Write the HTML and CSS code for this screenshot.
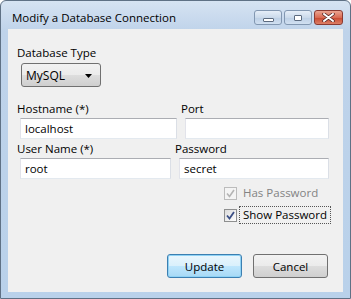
FILE: index.html
```html
<!DOCTYPE html>
<html lang="en">
<head>
  <meta charset="UTF-8">
  <title>Modify a Database Connection</title>
  <link rel="stylesheet" href="styles.css">
</head>
<body>
  <div class="window">
    <!--title bar-->
    <div class="titlebar">
      <span class="title">Modify a Database Connection</span>
      <div class="capBtns">
        <span class="capBtn min"><i></i></span>
        <span class="capBtn max"><i></i></span>
        <span class="capBtn close">
          <svg width="13" height="9" viewBox="0 0 13 9"><path d="M2 1 L11 8 M11 1 L2 8" stroke="#4a2020" stroke-width="3.4" stroke-linecap="round"/><path d="M2 1 L11 8 M11 1 L2 8" stroke="#fff" stroke-width="2" stroke-linecap="round"/></svg>
        </span>
      </div>
    </div>

    <!--client area-->
    <div class="client">
      <div class="typeGroup">
        <div class="label">Database Type</div>
        <div class="combo">
          <span>MySQL</span>
          <svg width="7" height="4" viewBox="0 0 7 4"><path d="M0 0 H7 L3.5 4 Z" fill="#000"/></svg>
        </div>
      </div>

      <div class="row hostRow">
        <div class="cell">
          <div class="label">Hostname (*)</div>
          <div class="input host">localhost</div>
        </div>
        <div class="cell">
          <div class="label">Port</div>
          <div class="input port"></div>
        </div>
      </div>

      <div class="row userRow">
        <div class="cell">
          <div class="label">User Name (*)</div>
          <div class="input user">root</div>
        </div>
        <div class="cell">
          <div class="label">Password</div>
          <div class="input pass">secret</div>
        </div>
      </div>

      <div class="checks">
        <div class="check disabled">
          <span class="box">
            <svg width="9" height="9" viewBox="0 0 9 9"><path d="M1 4.5 L3.5 7.5 L8 1" fill="none" stroke="#b4b4b4" stroke-width="1.6"/></svg>
          </span>
          <span class="checkText">Has Password</span>
        </div>
        <div class="check">
          <span class="box">
            <svg width="9" height="9" viewBox="0 0 9 9"><path d="M1 4.5 L3.5 7.5 L8 1" fill="none" stroke="#3b4f86" stroke-width="1.8"/></svg>
          </span>
          <span class="checkText focus">Show Password</span>
        </div>
      </div>

      <div class="actions">
        <span class="btn default">Update</span>
        <span class="btn">Cancel</span>
      </div>
    </div>
  </div>
</body>
</html>
```

FILE: styles.css
```css
*{box-sizing: border-box;}
body{
  margin:0;
  font-family:"Open Sans", "Noto Sans", sans-serif;
  font-size:11.5px;
  color:#000;
  background:#fff;
}
.window{
  width:351px;
  height:299px;
  border:1px solid #5f7185;
  border-radius:6px 6px 0 0;
  background:linear-gradient(#d6e3f2, #bfd3ea 30px, #b9d1ea);
  display:flex;
  flex-direction:column;
}

/*title bar*/
.titlebar{
  height:28px;
  display:flex;
  align-items:flex-start;
  justify-content:space-between;
  padding:0 7px 0 11px;
}
.title{
  font-size:11.5px;
  line-height:15px;
  margin-top:9px;
}
.capBtns{
  display:flex;
  gap:2px;
  margin-top:9px;
}
.capBtn{
  width:28px;
  height:15px;
  border:1px solid #8297b1;
  border-radius:3px;
  background:linear-gradient(#e6eef8, #cbdaeb 50%, #bccfe5 51%, #d1e0f1);
  display:flex;
  align-items:center;
  justify-content:center;
}
.capBtn i{
  display:block;
  border:1px solid #5c6b80;
  border-radius:1px;
  background:#fff;
}
.min i{width:11px; height:4px; margin-top:4px;}
.max i{width:8px; height:6px;}
.close{
  width:29px;
  border-color:#8b3a32;
  background:linear-gradient(#eba592, #d96b54 50%, #c8472f 51%, #dc7f66);
}

/*client area*/
.client{
  flex:1;
  margin:0 7px 6px;
  background:#f0f0f0;
  padding:16px 0 0 9px;
}
.label{
  line-height:15px;
  white-space:nowrap;
}
.combo{
  width:80px;
  height:24px;
  margin:3px 0 0 4px;
  border:1px solid #707070;
  border-radius:3px;
  background:linear-gradient(#f2f2f2, #ebebeb 50%, #dddddd 51%, #cfcfcf);
  display:flex;
  align-items:center;
  justify-content:space-between;
  padding:0 8px 0 4px;
  font-size:12px;
}
.combo svg{margin-top:2px;}

.row{
  display:grid;
}
.hostRow{
  grid-template-columns:164px 150px;
  margin-top:14px;
}
.userRow{
  grid-template-columns:158px 156px;
  margin-top:2px;
}
.input{
  height:21px;
  margin:2px 0 0 3px;
  border:1px solid;
  border-color:#abadb3 #dbdfe6 #e3e9ef #e2e3ea;
  background:#fff;
  padding:0 4px;
  line-height:19px;
}
.host{width:157px;}
.port{width:144px; margin-left:4px;}
.user{width:151px;}
.pass{width:150px; margin-left:4px;}

/*checkboxes*/
.checks{
  padding-left:207px;
  margin-top:5px;
}
.check{
  height:18px;
  display:flex;
  align-items:center;
}
.check + .check{margin-top:4px;}
.box{
  width:13px;
  height:13px;
  border:1px solid #8e8f8f;
  background:linear-gradient(135deg, #dcdcdc, #fefefe);
  display:flex;
  align-items:center;
  justify-content:center;
}
.disabled .box{border-color:#bcbcbc; background:#f4f4f4;}
.disabled .checkText{color:#838383;}
.checkText{
  margin-left:2px;
  padding:0 3px;
  line-height:16px;
  border:1px dotted transparent;
}
.checkText.focus{border-color:#555;}

/*buttons*/
.actions{
  display:flex;
  justify-content:flex-end;
  gap:11px;
  margin:30px 15px 0 0;
}
.btn{
  width:75px;
  height:24px;
  border:1px solid #707070;
  border-radius:3px;
  background:linear-gradient(#f2f2f2, #ebebeb 50%, #dddddd 51%, #cfcfcf);
  display:flex;
  align-items:center;
  justify-content:center;
}
.btn.default{
  border-color:#3c7fb1;
  box-shadow:inset 0 0 0 1px #8fd2f5;
  background:linear-gradient(#eaf6fd, #d9f0fc 50%, #bee6fd 51%, #a7d9f5);
}
```
